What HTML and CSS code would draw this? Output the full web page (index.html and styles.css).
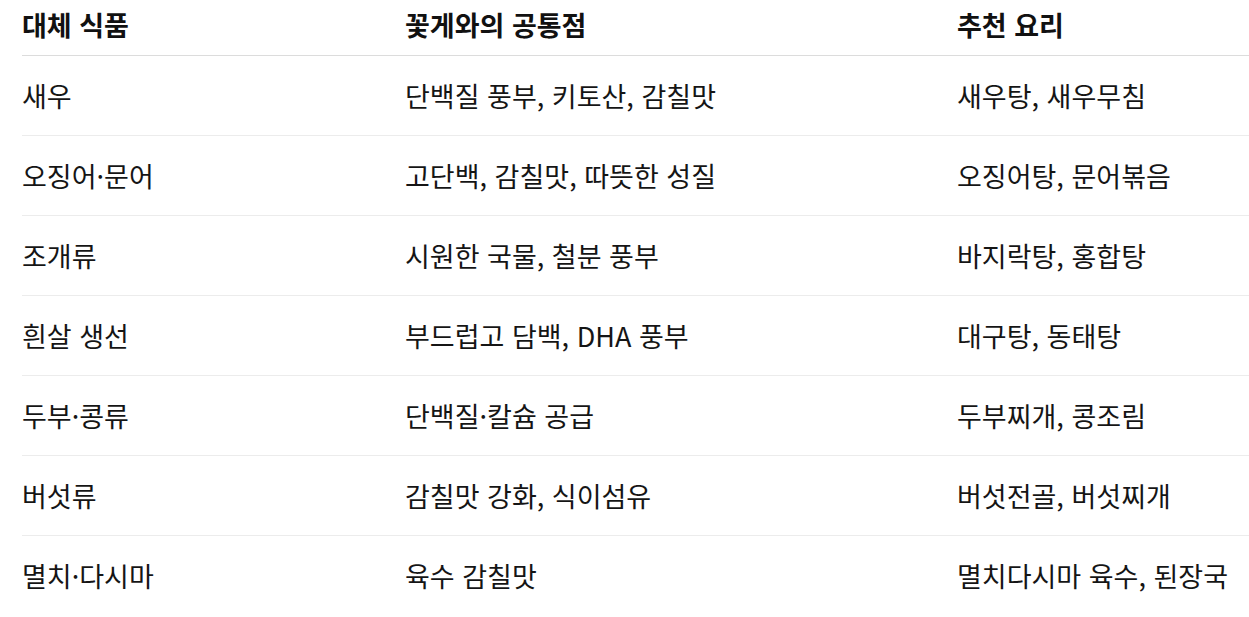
FILE: index.html
```html
<!DOCTYPE html>
<html lang="ko">
<head>
<meta charset="utf-8">
<link rel="stylesheet" href="styles.css">
</head>
<body>
<table class="food-table">
  <colgroup>
    <col class="c1"><col class="c2"><col class="c3">
  </colgroup>
  <thead>
    <tr><th>대체 식품</th><th>꽃게와의 공통점</th><th>추천 요리</th></tr>
  </thead>
  <tbody>
    <tr><td>새우</td><td>단백질 풍부, 키토산, 감칠맛</td><td>새우탕, 새우무침</td></tr>
    <tr><td>오징어·문어</td><td>고단백, 감칠맛, 따뜻한 성질</td><td>오징어탕, 문어볶음</td></tr>
    <tr><td>조개류</td><td>시원한 국물, 철분 풍부</td><td>바지락탕, 홍합탕</td></tr>
    <tr><td>흰살 생선</td><td>부드럽고 담백, DHA 풍부</td><td>대구탕, 동태탕</td></tr>
    <tr><td>두부·콩류</td><td>단백질·칼슘 공급</td><td>두부찌개, 콩조림</td></tr>
    <tr><td>버섯류</td><td>감칠맛 강화, 식이섬유</td><td>버섯전골, 버섯찌개</td></tr>
    <tr><td>멸치·다시마</td><td>육수 감칠맛</td><td>멸치다시마 육수, 된장국</td></tr>
  </tbody>
</table>
</body>
</html>
```
FILE: styles.css
```css
html, body {
  margin: 0;
  padding: 0;
  background: #ffffff;
  overflow: hidden;
}
body {
  padding-left: 22px;
  font-family: "Noto Sans CJK KR", "Noto Sans", sans-serif;
  color: #111111;
}
.food-table {
  width: 1227px;
  border-collapse: collapse;
  table-layout: fixed;
  font-size: 27px;
  line-height: 32px;
}
.c1 { width: 383px; }
.c2 { width: 552px; }
.c3 { width: auto; }
.food-table th {
  text-align: left;
  font-weight: 700;
  padding: 9px 0 14px 0;
  border-bottom: 1px solid #dcdcdc;
}
.food-table td {
  padding: 24px 0 23px 0;
  border-bottom: 1px solid #ececec;
  font-weight: 400;
  color: #151515;
}
.food-table tbody tr:last-child td {
  border-bottom: none;
}
```
